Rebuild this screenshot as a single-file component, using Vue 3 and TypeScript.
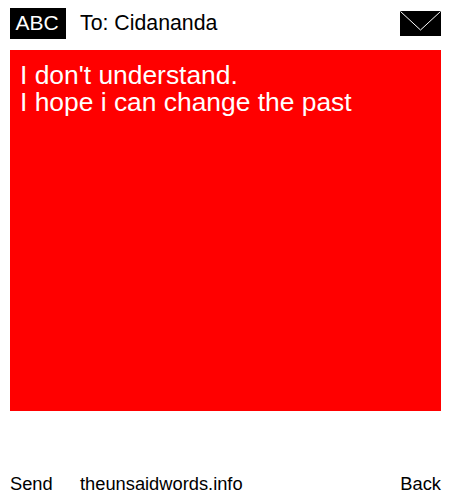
<script setup lang="ts">
const recipient = 'Cidananda'
const message = "I don't understand.\nI hope i can change the past"
</script>

<template>
  <div class="page">
    <header class="top">
      <span class="mode">ABC</span>
      <span class="to">To: {{ recipient }}</span>
      <svg class="envelope" width="41" height="25" viewBox="0 0 41 25" aria-hidden="true">
        <rect width="41" height="25" fill="#000" />
        <path d="M0.5 0.5 L20.5 19 L40.5 0.5" fill="none" stroke="#fff" stroke-width="1" />
      </svg>
    </header>
    <main class="message">{{ message }}</main>
    <footer class="bottom">
      <span class="send">Send</span>
      <span class="site">theunsaidwords.info</span>
      <span>Back</span>
    </footer>
  </div>
</template>

<style>
html,
body {
  margin: 0;
  background: #fff;
}
</style>

<style scoped>
.page {
  width: 431px;
  height: 500px;
  padding-left: 10px;
  display: flex;
  flex-direction: column;
  font-family: "Liberation Sans", Arial, sans-serif;
  color: #000;
}

.top {
  height: 31px;
  margin-top: 8px;
  margin-bottom: 11px;
  display: flex;
  align-items: center;
}

.mode {
  width: 56px;
  height: 31px;
  padding-right: 2px;
  box-sizing: border-box;
  line-height: 30px;
  background: #000;
  color: #fff;
  font-size: 21px;
  text-align: center;
}

.to {
  margin-left: 14px;
  font-size: 21.3px;
}

.envelope {
  margin-left: auto;
  margin-top: -1px;
}

.message {
  height: 361px;
  box-sizing: border-box;
  padding: 12px 10px;
  background: #f00;
  color: #fff;
  font-size: 26.4px;
  line-height: 27px;
  white-space: pre-line;
}

.bottom {
  margin-top: 62px;
  display: flex;
  font-size: 18.3px;
  line-height: 21px;
}

.send {
  width: 70px;
}

.site {
  flex: 1;
}
</style>
